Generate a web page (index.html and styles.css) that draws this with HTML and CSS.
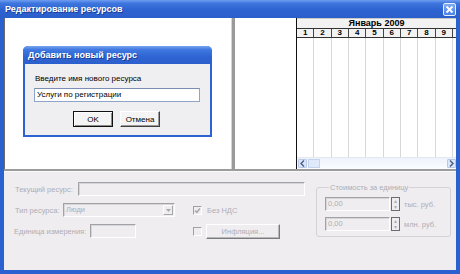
FILE: index.html
```html
<!DOCTYPE html>
<html lang="ru">
<head>
    <meta charset="UTF-8">
    <title>Редактирование ресурсов</title>
    <link rel="stylesheet" href="styles.css">
</head>
<body>
    <div class="window">
        <div class="titlebar">
            <span class="title">Редактирование ресурсов</span>
            <span class="close-btn">
                <svg width="9" height="9" viewBox="0 0 9 9"><path d="M1.5 1.5L7.5 7.5M7.5 1.5L1.5 7.5" stroke="#fff" stroke-width="1.8" fill="none"/></svg>
            </span>
        </div>
        <div class="frame">
            <div class="upper">
                <div class="list-pane">
                    <!-- modal dialog floating over the resource list -->
                    <div class="dialog">
                        <div class="dialog-title">Добавить новый ресурс</div>
                        <div class="dialog-body">
                            <div class="dialog-label">Введите имя нового ресурса</div>
                            <div class="dialog-input">Услуги по регистрации</div>
                            <div class="dialog-buttons">
                                <span class="btn default">OK</span>
                                <span class="btn">Отмена</span>
                            </div>
                        </div>
                    </div>
                </div>
                <div class="splitter"></div>
                <div class="names-pane"></div>
                <div class="calendar">
                    <div class="cal-month">Январь 2009</div>
                    <div class="cal-days">
                        <span>1</span><span>2</span><span>3</span><span>4</span><span>5</span>
                        <span>6</span><span>7</span><span>8</span><span>9</span><span></span>
                    </div>
                    <div class="cal-grid">
                        <span></span><span></span><span></span><span></span><span></span>
                        <span></span><span></span><span></span><span></span><span></span>
                    </div>
                    <div class="cal-scroll">
                        <span class="scroll-btn">
                            <svg width="5" height="7" viewBox="0 0 5 7"><path d="M4 0.5L1 3.5L4 6.5" stroke="#4d6185" stroke-width="1.5" fill="none"/></svg>
                        </span>
                        <span class="scroll-thumb"></span>
                        <span class="scroll-track"></span>
                        <span class="scroll-btn">
                            <svg width="5" height="7" viewBox="0 0 5 7"><path d="M1 0.5L4 3.5L1 6.5" stroke="#4d6185" stroke-width="1.5" fill="none"/></svg>
                        </span>
                    </div>
                </div>
            </div>
            <div class="lower">
                <div class="fields">
                    <div class="row">
                        <span class="lbl w-cur">Текущий ресурс:</span>
                        <span class="field f-cur"></span>
                    </div>
                    <div class="row">
                        <span class="lbl w-type">Тип ресурса:</span>
                        <span class="field combo">
                            <span class="combo-text">Люди</span>
                            <span class="combo-btn">
                                <svg width="5" height="3" viewBox="0 0 5 3"><path d="M0 0H5L2.5 3Z" fill="#a8a8b0"/></svg>
                            </span>
                        </span>
                        <span class="check check-first">
                            <svg width="7" height="7" viewBox="0 0 7 7"><path d="M1 3.5L2.8 5.3L6 1.5" stroke="#a8a8b0" stroke-width="1.5" fill="none"/></svg>
                        </span>
                        <span class="lbl check-lbl">Без НДС</span>
                    </div>
                    <div class="row">
                        <span class="lbl w-unit">Единица измерения:</span>
                        <span class="field f-unit"></span>
                        <span class="check check-second"></span>
                        <span class="btn wide">Инфляция...</span>
                    </div>
                </div>
                <fieldset class="cost">
                    <legend>Стоимость за единицу</legend>
                    <div class="cost-row">
                        <span class="field f-num">0,00</span>
                        <span class="spin"><i>▴</i><i>▾</i></span>
                        <span class="lbl">тыс. руб.</span>
                    </div>
                    <div class="cost-row">
                        <span class="field f-num">0,00</span>
                        <span class="spin"><i>▴</i><i>▾</i></span>
                        <span class="lbl">млн. руб.</span>
                    </div>
                </fieldset>
            </div>
        </div>
    </div>
</body>
</html>
```

FILE: styles.css
```css
body {
    margin: 0;
    padding: 0;
    font-family: "Liberation Sans", Arial, sans-serif;
    font-size: 8px;
    overflow: hidden;
}
.window {
    width: 460px;
    height: 274px;
    display: flex;
    flex-direction: column;
    background-color: #2b60d0;
}
.titlebar {
    height: 18px;
    flex: none;
    display: flex;
    align-items: center;
    justify-content: space-between;
    padding: 0 4px 0 5px;
    background: linear-gradient(to bottom, #6f9ef0 0%, #3e76de 18%, #2d63d1 55%, #2a5ecb 100%);
}
.title {
    color: white;
    font-weight: bold;
    font-size: 9px;
    text-shadow: 1px 1px 0 #1a3e99;
}
.close-btn {
    width: 13px;
    height: 13px;
    box-sizing: border-box;
    border: 1px solid #e8eefc;
    border-radius: 2px;
    background: linear-gradient(to bottom, #7eaaf6, #4a80ea);
    display: flex;
    align-items: center;
    justify-content: center;
}
.frame {
    flex: 1;
    display: flex;
    flex-direction: column;
    padding: 0 4px 4px 4px;
}

/* upper part: list, splitter, names, calendar */
.upper {
    height: 153px;
    flex: none;
    display: flex;
    box-sizing: border-box;
    border-bottom: 2px solid #9c9c9c;
    background-color: white;
}
.list-pane {
    width: 227px;
    box-sizing: border-box;
    border-left: 1px solid #6a6a6a;
    position: relative;
}
.splitter {
    width: 3px;
    background-color: #9a9a9a;
    border-left: 1px solid #d6d6d6;
}
.names-pane {
    width: 61px;
}
.calendar {
    flex: 1;
    display: flex;
    flex-direction: column;
    border-left: 1px solid #111;
    overflow: hidden;
}
.cal-month {
    height: 9px;
    line-height: 9px;
    text-align: center;
    font-weight: bold;
    font-size: 9px;
    background-color: #f2f2f2;
    border-top: 1px solid #c8c8c8;
    border-bottom: 1px solid #333;
}
.cal-days {
    height: 8px;
    display: flex;
    background-color: #f2f2f2;
    border-bottom: 1px solid #333;
}
.cal-days span {
    width: 17.33px;
    flex: none;
    box-sizing: border-box;
    border-right: 1px solid #444;
    text-align: center;
    line-height: 8px;
    font-weight: bold;
}
.cal-grid {
    flex: 1;
    display: flex;
}
.cal-grid span {
    width: 17.33px;
    flex: none;
    box-sizing: border-box;
    border-right: 1px solid #d8d8d8;
}
.cal-scroll {
    height: 11px;
    display: flex;
    align-items: center;
    gap: 1px;
    padding: 0 0 0 1px;
    background: linear-gradient(to bottom, #eef3fb, #fafcff);
    border-top: 1px solid #e3e9f3;
}
.scroll-btn {
    width: 9px;
    height: 9px;
    box-sizing: border-box;
    border: 1px solid #b8c8e6;
    border-radius: 1px;
    background-color: #dce7fa;
    display: flex;
    align-items: center;
    justify-content: center;
}
.scroll-thumb {
    width: 12px;
    height: 9px;
    box-sizing: border-box;
    border: 1px solid #c4d2ec;
    background-color: #e0e9f9;
}
.scroll-track {
    flex: 1;
}

/* add resource dialog */
.dialog {
    position: absolute;
    left: 18px;
    top: 28px;
    width: 189px;
    height: 91px;
    display: flex;
    flex-direction: column;
    background-color: #2d62d2;
    border-radius: 5px 5px 0 0;
    padding: 0 2px 2px 2px;
    box-sizing: border-box;
}
.dialog-title {
    height: 18px;
    flex: none;
    line-height: 18px;
    color: white;
    font-weight: bold;
    font-size: 9px;
    text-shadow: 1px 1px 0 #1a3e99;
    border-radius: 5px 5px 0 0;
    margin: 0 -2px;
    padding-left: 5px;
    background: linear-gradient(to bottom, #79a6f3 0%, #4079e0 20%, #2e64d2 60%, #2b5fcc 100%);
}
.dialog-body {
    flex: 1;
    background-color: #efeff1;
    padding: 10px 0 0 9px;
}
.dialog-label {
    line-height: 10px;
    padding-left: 1px;
}
.dialog-input {
    width: 166px;
    height: 14px;
    margin-top: 4px;
    box-sizing: border-box;
    border: 1px solid #8ea4c8;
    border-top-color: #7b8fb4;
    background-color: white;
    line-height: 12px;
    padding-left: 2px;
}
.dialog-buttons {
    display: flex;
    gap: 7px;
    margin: 9px 0 0 39px;
}
.btn {
    width: 40px;
    height: 16px;
    box-sizing: border-box;
    display: flex;
    align-items: center;
    justify-content: center;
    background-color: #f4f4f4;
    border: 1px solid #fff;
    border-right-color: #404040;
    border-bottom-color: #404040;
    box-shadow: inset -1px -1px 0 #9a9a9a;
}
.btn.default {
    border: 1px solid #111;
    box-shadow: inset 1px 1px 0 #fff, inset -1px -1px 0 #8a8a8a;
}

/* lower part: disabled resource properties */
.lower {
    flex: 1;
    display: flex;
    align-items: flex-start;
    padding: 10px 0 0 10px;
    background-color: #efedf0;
    border-top: 1px solid #fafafa;
    color: #aeaeb6;
    font-size: 7.5px;
}
.fields {
    width: 292px;
    display: flex;
    flex-direction: column;
    gap: 7px;
}
.row {
    height: 14px;
    display: flex;
    align-items: center;
}
.lbl {
    flex: none;
    white-space: nowrap;
}
.w-cur { width: 64px; padding-left: 1px; box-sizing: border-box; }
.w-type { width: 49px; padding-left: 1px; box-sizing: border-box; }
.w-unit { width: 76px; }
.field {
    height: 14px;
    box-sizing: border-box;
    border: 1px solid #fff;
    border-top-color: #a2a2a6;
    border-left-color: #a2a2a6;
    box-shadow: inset 1px 1px 0 #d6d6da;
    background-color: #efedf0;
    line-height: 12px;
    padding-left: 2px;
}
.f-cur { width: 227px; }
.f-unit { width: 46px; }
.combo {
    width: 112px;
    display: flex;
    align-items: center;
    justify-content: space-between;
    padding-right: 1px;
}
.combo-btn {
    width: 10px;
    height: 10px;
    box-sizing: border-box;
    border: 1px solid #fff;
    border-right-color: #a8a8ac;
    border-bottom-color: #a8a8ac;
    display: flex;
    align-items: center;
    justify-content: center;
}
.check {
    width: 9px;
    height: 9px;
    flex: none;
    box-sizing: border-box;
    border: 1px solid #fff;
    border-top-color: #a0a0a4;
    border-left-color: #a0a0a4;
    display: flex;
    align-items: center;
    justify-content: center;
}
.check-first { margin-left: 18px; }
.check-second { margin-left: 57px; }
.check-lbl { margin-left: 5px; }
.btn.wide {
    width: 74px;
    height: 15px;
    margin-left: 4px;
    background-color: #efedf0;
    border-right-color: #7a7a7e;
    border-bottom-color: #7a7a7e;
    box-shadow: inset -1px -1px 0 #b8b8bc;
}
.cost {
    width: 135px;
    margin: 1px 0 0 10px;
    padding: 5px 0 5px 8px;
    box-sizing: border-box;
    border: 1px solid #d4d2d6;
    border-radius: 3px;
    display: flex;
    flex-direction: column;
    gap: 6px;
}
.cost legend {
    padding: 0 1px;
    margin-left: 4px;
    line-height: 9px;
}
.cost-row {
    display: flex;
    align-items: center;
}
.f-num { width: 65px; }
.spin {
    width: 9px;
    height: 14px;
    margin-left: 1px;
    box-sizing: border-box;
    border: 1px solid #6c6c70;
    display: flex;
    flex-direction: column;
    align-items: center;
    justify-content: space-between;
    font-size: 6px;
    line-height: 6px;
}
.spin i {
    font-style: normal;
}
.cost-row .lbl {
    margin-left: 4px;
}
```
